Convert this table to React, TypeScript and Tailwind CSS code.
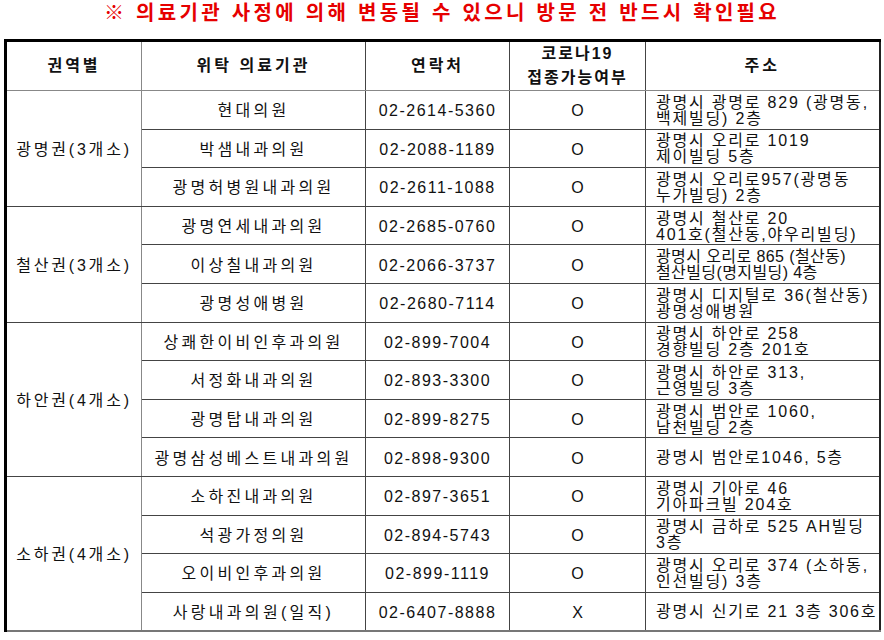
import React from "react"

type Clinic = {
  name: string
  phone: string
  ok: string
  addr: string[]
  tight?: boolean
}

type Region = {
  label: string
  clinics: Clinic[]
}

const regions: Region[] = [
  {
    label: "광명권(3개소)",
    clinics: [
      { name: "현대의원", phone: "02-2614-5360", ok: "O", addr: ["광명시 광명로 829 (광명동,", "백제빌딩) 2층"] },
      { name: "박샘내과의원", phone: "02-2088-1189", ok: "O", addr: ["광명시 오리로 1019", "제이빌딩 5층"] },
      { name: "광명허병원내과의원", phone: "02-2611-1088", ok: "O", addr: ["광명시 오리로957(광명동", "누가빌딩) 2층"] },
    ],
  },
  {
    label: "철산권(3개소)",
    clinics: [
      { name: "광명연세내과의원", phone: "02-2685-0760", ok: "O", addr: ["광명시 철산로 20", "401호(철산동,야우리빌딩)"] },
      { name: "이상칠내과의원", phone: "02-2066-3737", ok: "O", addr: ["광명시 오리로 865 (철산동)", "철산빌딩(명지빌딩) 4층"], tight: true },
      { name: "광명성애병원", phone: "02-2680-7114", ok: "O", addr: ["광명시 디지털로 36(철산동)", "광명성애병원"] },
    ],
  },
  {
    label: "하안권(4개소)",
    clinics: [
      { name: "상쾌한이비인후과의원", phone: "02-899-7004", ok: "O", addr: ["광명시 하안로 258", "경향빌딩 2층 201호"] },
      { name: "서정화내과의원", phone: "02-893-3300", ok: "O", addr: ["광명시 하안로 313,", "근영빌딩 3층"] },
      { name: "광명탑내과의원", phone: "02-899-8275", ok: "O", addr: ["광명시 범안로 1060,", "남천빌딩 2층"] },
      { name: "광명삼성베스트내과의원", phone: "02-898-9300", ok: "O", addr: ["광명시 범안로1046, 5층"] },
    ],
  },
  {
    label: "소하권(4개소)",
    clinics: [
      { name: "소하진내과의원", phone: "02-897-3651", ok: "O", addr: ["광명시 기아로 46", "기아파크빌 204호"] },
      { name: "석광가정의원", phone: "02-894-5743", ok: "O", addr: ["광명시 금하로 525 AH빌딩", "3층"] },
      { name: "오이비인후과의원", phone: "02-899-1119", ok: "O", addr: ["광명시 오리로 374 (소하동,", "인선빌딩) 3층"] },
      { name: "사랑내과의원(일직)", phone: "02-6407-8888", ok: "X", addr: ["광명시 신기로 21 3층 306호"] },
    ],
  },
]

const font = { fontFamily: "'Liberation Sans', 'Noto Sans CJK KR', sans-serif" }

export default function App() {
  return (
    <div className="w-[884px] h-[640px] bg-white text-[#111] overflow-hidden" style={font}>
      <h1 className="h-[39px] pt-[1px] text-center text-[20px] leading-[24px] font-bold text-[#e60000] tracking-[3.3px]">
        ※ 의료기관 사정에 의해 변동될 수 있으니 방문 전 반드시 확인필요
      </h1>
      <table className="ml-[4px] w-[874px] table-fixed border-collapse border-t-[3px] border-l-[3px] border-t-black border-l-black border-r-[2px] border-r-[#222] border-b-[2px] border-b-[#777]">
        <colgroup>
          <col className="w-[136px]" />
          <col className="w-[224px]" />
          <col className="w-[144px]" />
          <col className="w-[136px]" />
          <col className="w-[234px]" />
        </colgroup>
        <thead>
          <tr className="h-[50px] text-[16px] leading-[20px] font-bold tracking-[3px]">
            <th className="p-0 border-r border-r-[#888] border-b border-b-[#888]">권역별</th>
            <th className="p-0 border-r border-r-[#444] border-b border-b-[#888]">위탁 의료기관</th>
            <th className="p-0 border-r border-r-[#444] border-b border-b-[#888]">연락처</th>
            <th className="p-0 border-r border-r-[#444] border-b border-b-[#888] leading-[24px] tracking-[2px]">
              코로나19
              <br />
              접종가능여부
            </th>
            <th className="p-0 border-b border-b-[#888]">주소</th>
          </tr>
        </thead>
        <tbody>
          {regions.map((region) =>
            region.clinics.map((c, i) => (
              <tr key={c.name} className="h-[38.6px] text-[16px] leading-[20px]">
                {i === 0 && (
                  <td
                    rowSpan={region.clinics.length}
                    className="p-0 pt-[3px] text-center tracking-[2.8px] border-r border-r-[#888] border-b border-b-[#444]"
                  >
                    {region.label}
                  </td>
                )}
                <td className="p-0 pt-[3px] text-center tracking-[3.3px] border-r border-r-[#444] border-b border-b-[#444]">
                  {c.name}
                </td>
                <td className="p-0 pt-[3px] text-center tracking-[1.5px] border-r border-r-[#444] border-b border-b-[#444]">
                  {c.phone}
                </td>
                <td className="p-0 pt-[3px] text-center border-r border-r-[#444] border-b border-b-[#444]">{c.ok}</td>
                <td
                  className={`p-0 pl-[10px] pt-[2px] whitespace-nowrap text-[16px] leading-[16px] border-b border-b-[#444] ${
                    c.tight ? "tracking-[0.4px]" : "tracking-[1.8px]"
                  }`}
                >
                  {c.addr.map((line) => (
                    <div key={line}>{line}</div>
                  ))}
                </td>
              </tr>
            ))
          )}
        </tbody>
      </table>
    </div>
  )
}
